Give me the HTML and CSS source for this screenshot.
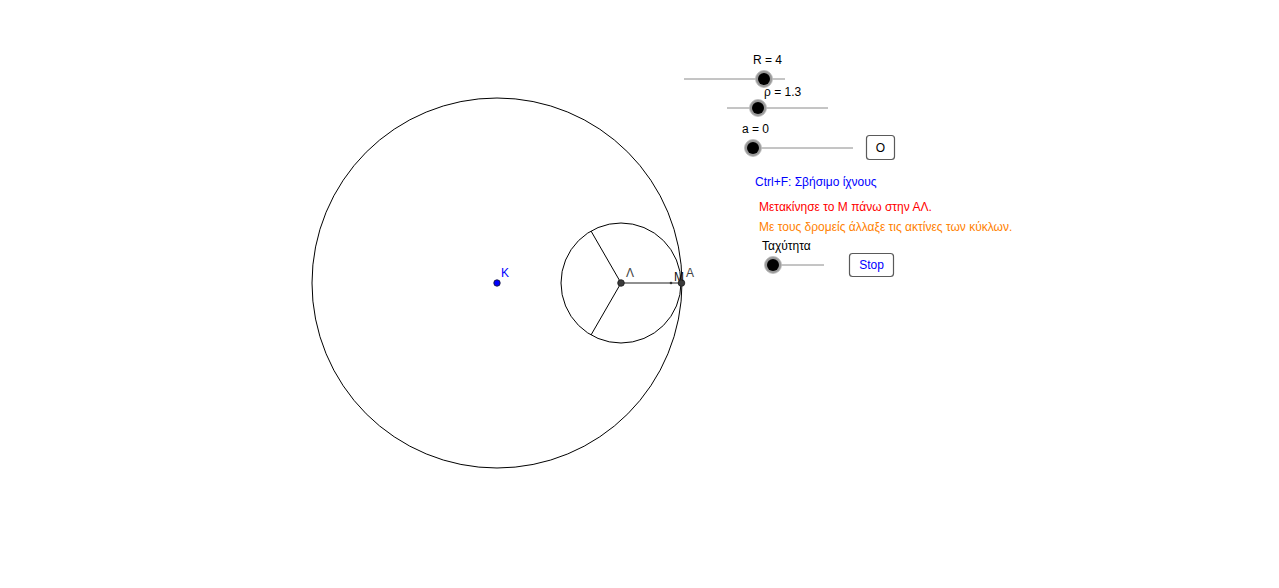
FILE: index.html
```html
<!DOCTYPE html>
<html>
<head>
<meta charset="utf-8">
<link rel="stylesheet" href="styles.css">
</head>
<body>
<div class="applet">
<svg class="canvas" width="1279" height="588" viewBox="0 0 1279 588" xmlns="http://www.w3.org/2000/svg">
  <!-- geometry -->
  <circle class="curve" cx="497" cy="283" r="185"/>
  <circle class="curve" cx="621" cy="283" r="60"/>
  <line class="curve" x1="621" y1="283" x2="591" y2="231"/>
  <line class="curve" x1="621" y1="283" x2="591" y2="335"/>
  <line class="seg" x1="621" y1="283" x2="681" y2="283"/>
  <circle class="tiny" cx="671" cy="283" r="1.3"/>
  <circle class="pt-dark" cx="621" cy="283" r="3.3"/>
  <circle class="pt-dark" cx="681.5" cy="283" r="3.3"/>
  <circle class="pt-blue" cx="497" cy="283" r="3.2"/>
  <text class="lbl" x="626" y="277">Λ</text>
  <text class="lbl dark" x="674" y="281">M</text>
  <text class="lbl" x="686" y="277">A</text>
  <text class="lbl blue" x="501" y="277">K</text>

  <!-- slider R -->
  <text class="txt" x="753" y="64">R = 4</text>
  <line class="track" x1="684" y1="79" x2="785" y2="79"/>
  <circle class="knob-ring" cx="764" cy="79" r="8.5"/>
  <circle class="knob" cx="764" cy="79" r="6"/>

  <!-- slider rho -->
  <text class="txt" x="764" y="96">ρ = 1.3</text>
  <line class="track" x1="727" y1="108" x2="828" y2="108"/>
  <circle class="knob-ring" cx="758" cy="108" r="8.5"/>
  <circle class="knob" cx="758" cy="108" r="6"/>

  <!-- slider a -->
  <text class="txt" x="742" y="133">a = 0</text>
  <line class="track" x1="753" y1="148" x2="853" y2="148"/>
  <circle class="knob-ring" cx="753" cy="148" r="8.5"/>
  <circle class="knob" cx="753" cy="148" r="6"/>

  <!-- button O -->
  <rect class="btn" x="866.5" y="135.5" width="28" height="24" rx="3"/>
  <text class="txt mid" x="880.5" y="151.5">O</text>

  <!-- texts -->
  <text class="txt blue" x="755" y="186">Ctrl+F: Σβήσιμο ίχνους</text>
  <text class="txt red" x="759" y="211">Μετακίνησε το Μ πάνω στην ΑΛ.</text>
  <text class="txt orange" x="759" y="231">Με τους δρομείς άλλαξε τις ακτίνες των κύκλων.</text>
  <text class="txt" x="762" y="250">Ταχύτητα</text>

  <!-- speed slider -->
  <line class="track" x1="773" y1="265" x2="824" y2="265"/>
  <circle class="knob-ring" cx="773" cy="265" r="8.5"/>
  <circle class="knob" cx="773" cy="265" r="6"/>

  <!-- Stop button -->
  <rect class="btn" x="849.5" y="253.5" width="44" height="23" rx="3"/>
  <text class="txt blue mid" x="871.5" y="268.5">Stop</text>
</svg>
</div>
</body>
</html>
```
FILE: styles.css
```css
html, body {
  margin: 0;
  padding: 0;
  background: #ffffff;
  overflow: hidden;
}
.applet {
  width: 1279px;
  height: 588px;
}
.canvas {
  display: block;
}
.curve {
  fill: none;
  stroke: #000000;
  stroke-width: 1;
}
.seg {
  stroke: #222222;
  stroke-width: 1.2;
}
.tiny {
  fill: #333333;
}
.pt-dark {
  fill: #3a3a3a;
  stroke: #1a1a1a;
  stroke-width: 0.8;
}
.pt-blue {
  fill: #0000ff;
  stroke: #1a1a3a;
  stroke-width: 0.9;
}
.lbl {
  font-family: "Liberation Sans", Arial, sans-serif;
  font-size: 12px;
  fill: #444444;
}
.lbl.dark {
  fill: #111111;
}
.txt {
  font-family: "Liberation Sans", Arial, sans-serif;
  font-size: 12px;
  fill: #000000;
}
.mid {
  text-anchor: middle;
}
.blue {
  fill: #0000ff;
}
.lbl.blue {
  fill: #0000ff;
}
.red {
  fill: #ff0000;
}
.orange {
  fill: #ff7f00;
}
.track {
  stroke: #8a8a8a;
  stroke-width: 1;
}
.knob-ring {
  fill: #999999;
  stroke: #bbbbbb;
  stroke-width: 0.8;
}
.knob {
  fill: #000000;
}
.btn {
  fill: #ffffff;
  stroke: #5a5a5a;
  stroke-width: 1.2;
}
```
